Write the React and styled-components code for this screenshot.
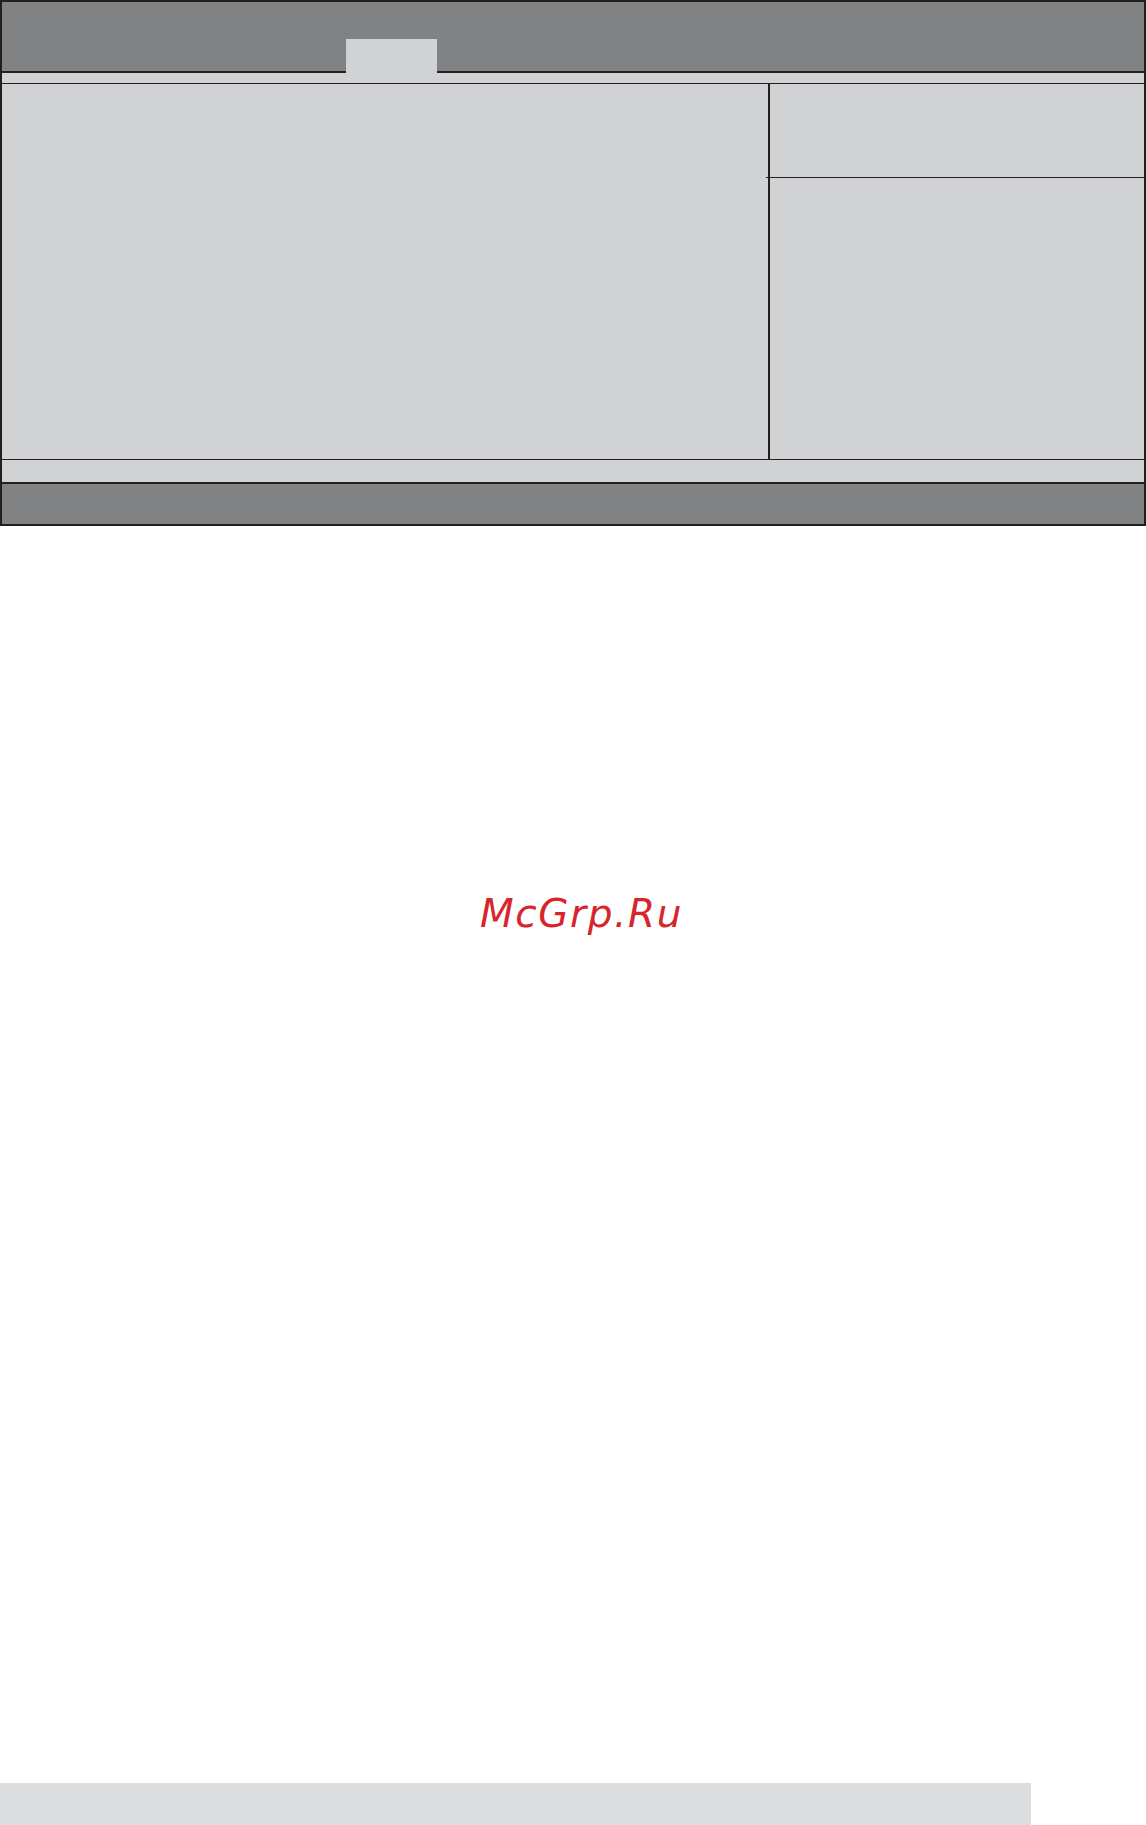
import styled, { createGlobalStyle } from "styled-components";

const Global = createGlobalStyle`
  html, body {
    margin: 0;
    padding: 0;
    background: #ffffff;
  }
  * { box-sizing: border-box; }
`;

const LINE = "#231f20";
const DARK = "#818284";
const LIGHT = "#d1d2d4";

const Page = styled.div`
  width: 1146px;
  min-height: 1825px;
  display: flex;
  flex-direction: column;
  font-family: "DejaVu Sans", sans-serif;
`;

const Frame = styled.section`
  width: 1146px;
  border: 2px solid ${LINE};
  background: ${LIGHT};
  display: flex;
  flex-direction: column;
`;

const Header = styled.header`
  height: 71px;
  background: ${DARK};
  border-bottom: 2px solid ${LINE};
  display: flex;
  align-items: flex-end;
  padding-left: 344px;
`;

const Tab = styled.div`
  width: 91px;
  height: 34px;
  margin-bottom: -2px;
  background: ${LIGHT};
`;

const Strip = styled.div`
  height: ${(p) => p.$h}px;
  border-bottom: ${(p) => (p.$line ? `1px solid ${LINE}` : "none")};
`;

const Main = styled.div`
  height: 376px;
  display: grid;
  grid-template-columns: 766px 1fr;
  border-bottom: 1px solid ${LINE};
`;

const Content = styled.div``;

const Side = styled.aside`
  border-left: 2px solid ${LINE};
  display: flex;
  flex-direction: column;
`;

const HelpTop = styled.div`
  height: 94px;
  border-bottom: 1px solid ${LINE};
  position: relative;
  &::after {
    content: "";
    position: absolute;
    left: -4px;
    bottom: -1px;
    width: 4px;
    height: 1px;
    background: ${LINE};
  }
`;

const HelpBody = styled.div`
  flex: 1;
`;

const Footer = styled.footer`
  height: 42px;
  background: ${DARK};
  border-top: 2px solid ${LINE};
`;

const Watermark = styled.div`
  margin-top: 368px;
  padding-left: 480px;
  font-family: "DejaVu Sans", sans-serif;
  font-style: oblique;
  font-size: 39px;
  line-height: 1;
  letter-spacing: 1.6px;
  color: #d7262b;
`;

const BottomBar = styled.div`
  margin-top: auto;
  width: 1031px;
  height: 42px;
  background: #dcdddf;
`;

export default function App() {
  return (
    <Page>
      <Global />
      <Frame>
        <Header>
          <Tab />
        </Header>
        <Strip $h={11} $line />
        <Main>
          <Content />
          <Side>
            <HelpTop />
            <HelpBody />
          </Side>
        </Main>
        <Strip $h={22} />
        <Footer />
      </Frame>
      <Watermark>McGrp.Ru</Watermark>
      <BottomBar />
    </Page>
  );
}
